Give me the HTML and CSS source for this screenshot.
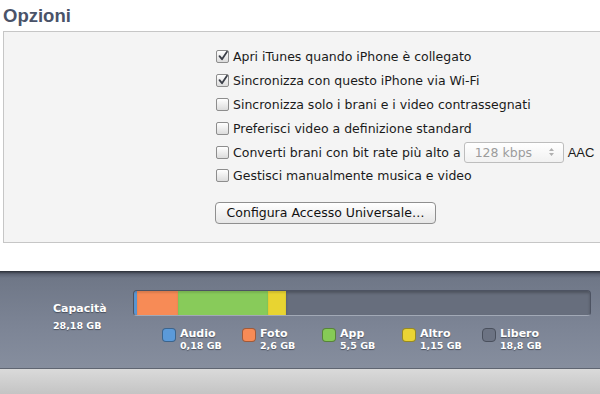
FILE: index.html
```html
<!DOCTYPE html>
<html lang="it">
<head>
    <meta charset="UTF-8">
    <title>Opzioni</title>
    <link rel="stylesheet" href="styles.css">
</head>
<body>
    <h2 class="title">Opzioni</h2>
    <div class="panel">
        <div class="options">
            <div class="opt"><span class="box checked"><svg viewBox="0 0 12 12" width="12" height="12"><path d="M2.5 6.2 L5 9.2 L10 1.8" fill="none" stroke="#3b3f48" stroke-width="1.8" stroke-linecap="round" stroke-linejoin="round"/></svg></span>Apri iTunes quando iPhone è collegato</div>
            <div class="opt"><span class="box checked"><svg viewBox="0 0 12 12" width="12" height="12"><path d="M2.5 6.2 L5 9.2 L10 1.8" fill="none" stroke="#3b3f48" stroke-width="1.8" stroke-linecap="round" stroke-linejoin="round"/></svg></span>Sincronizza con questo iPhone via Wi-Fi</div>
            <div class="opt"><span class="box"></span>Sincronizza solo i brani e i video contrassegnati</div>
            <div class="opt"><span class="box"></span>Preferisci video a definizione standard</div>
            <div class="opt"><span class="box"></span>Converti brani con bit rate più alto a
                <span class="select"><span class="select-text">128 kbps</span><svg viewBox="0 0 7 10" width="7" height="10"><path d="M3.5 1 L6 4 L1 4 Z M3.5 9 L6 6 L1 6 Z" fill="#b0b0b0"/></svg></span>
                <span class="aac">AAC</span></div>
            <div class="opt"><span class="box"></span>Gestisci manualmente musica e video</div>
            <button class="btn">Configura Accesso Universale…</button>
        </div>
    </div>

    <div class="capacity">
        <div class="cap-label">
            <div class="cap-name">Capacità</div>
            <div class="cap-size">28,18 GB</div>
        </div>
        <div class="cap-main">
            <div class="bar">
                <span class="seg audio" style="width:3px"></span>
                <span class="seg foto" style="width:41px"></span>
                <span class="seg app" style="width:90px"></span>
                <span class="seg altro" style="width:18px"></span>
                <span class="seg libero"></span>
            </div>
            <div class="legend">
                <div class="item"><span class="swatch audio"></span><div><div class="name">Audio</div><div class="size">0,18 GB</div></div></div>
                <div class="item"><span class="swatch foto"></span><div><div class="name">Foto</div><div class="size">2,6 GB</div></div></div>
                <div class="item"><span class="swatch app"></span><div><div class="name">App</div><div class="size">5,5 GB</div></div></div>
                <div class="item"><span class="swatch altro"></span><div><div class="name">Altro</div><div class="size">1,15 GB</div></div></div>
                <div class="item"><span class="swatch libero"></span><div><div class="name">Libero</div><div class="size">18,8 GB</div></div></div>
            </div>
        </div>
    </div>
    <div class="footer"></div>
</body>
</html>
```

FILE: styles.css
```css
body {
    margin: 0;
    background: #ffffff;
    font-family: "DejaVu Sans", sans-serif;
    font-size: 12.5px;
    color: #1a1a1a;
    overflow: hidden;
}
.title {
    font-family: "Liberation Sans", Arial, sans-serif;
    font-size: 18.5px;
    line-height: 22px;
    font-weight: bold;
    color: #4a5369;
    margin: 5px 0 4px 3px;
}
.panel {
    margin-left: 3px;
    width: 620px;
    height: 210px;
    background: #f4f4f4;
    border: 1px solid #c6c6c6;
    margin-bottom: 28px;
}
.options {
    padding: 13px 0 0 212px;
    display: flex;
    flex-direction: column;
    align-items: flex-start;
}
.opt {
    height: 23.8px;
    display: flex;
    align-items: center;
    white-space: nowrap;
}
.box {
    width: 11px;
    height: 11px;
    border: 1px solid #8d8d8d;
    border-radius: 2px;
    background: linear-gradient(#ffffff, #dcdcdc);
    margin-right: 4px;
    position: relative;
    flex: none;
}
.box svg {
    position: absolute;
    left: 0;
    top: -1px;
}
.select {
    display: inline-flex;
    align-items: center;
    justify-content: space-between;
    width: 100px;
    height: 21px;
    box-sizing: border-box;
    margin-left: 3px;
    padding: 0 8px 0 10px;
    border: 1px solid #bdbdbd;
    border-radius: 3px;
    background: linear-gradient(#ffffff, #f1f1f1);
    color: #9c9c9c;
}
.aac {
    margin-left: 4px;
    font-family: "Liberation Sans", Arial, sans-serif;
    font-size: 13px;
}
.btn {
    margin-top: 14px;
    margin-left: -1px;
    height: 22px;
    width: 221px;
    font-family: "DejaVu Sans", sans-serif;
    font-size: 12.5px;
    color: #111;
    border: 1px solid #8f8f8f;
    border-radius: 4px;
    background: linear-gradient(#ffffff, #e6e6e6);
    padding: 0;
}
.capacity {
    height: 97px;
    background: linear-gradient(#2a2e36 0px, #5b6272 3px, #6f7787 7px, #7c8495 55px, #868e9e 97px);
    display: flex;
    padding-left: 53px;
    box-sizing: border-box;
    color: #ffffff;
    font-weight: bold;
    text-shadow: 0 1px 1px rgba(40, 45, 55, 0.6);
}
.cap-label {
    width: 80px;
    padding-top: 31px;
}
.cap-name {
    font-size: 11px;
    line-height: 14px;
}
.cap-size {
    font-size: 9.5px;
    line-height: 14px;
    margin-top: 3px;
}
.cap-main {
    padding-top: 19px;
}
.bar {
    width: 458px;
    height: 26px;
    box-sizing: border-box;
    display: flex;
    border-radius: 4px;
    overflow: hidden;
    border: 1px solid #4d5362;
    border-bottom-color: #a2a9b6;
    background: #666d7c;
}
.seg {
    height: 100%;
    box-shadow: inset 0 2px 2px rgba(0, 0, 0, 0.12);
}
.seg.audio { background: #5a98d6; }
.seg.foto { background: #f78b56; }
.seg.app { background: #88cb5a; }
.seg.altro { background: #e8d431; }
.seg.libero {
    flex: 1;
    background: #676e7d;
    box-shadow: inset 0 2px 3px rgba(0, 0, 0, 0.25);
}
.legend {
    display: flex;
    padding-left: 29px;
    margin-top: 11px;
}
.item {
    width: 80px;
    display: flex;
    align-items: flex-start;
}
.swatch {
    width: 14px;
    height: 14px;
    box-sizing: border-box;
    border-radius: 4px;
    margin-right: 4px;
    margin-top: 1px;
    border: 1px solid rgba(0, 0, 0, 0.35);
}
.swatch.audio { background: #5b9ad9; }
.swatch.foto { background: #f78b56; }
.swatch.app { background: #86cb56; }
.swatch.altro { background: #ead434; }
.swatch.libero { background: #6c7383; border-color: #4a505d; }
.name {
    font-size: 11px;
    line-height: 13px;
}
.size {
    font-size: 9.5px;
    line-height: 12px;
}
.footer {
    height: 25px;
    border-top: 1px solid #5f6571;
    background: linear-gradient(#dadada, #c4c4c4);
}
```
